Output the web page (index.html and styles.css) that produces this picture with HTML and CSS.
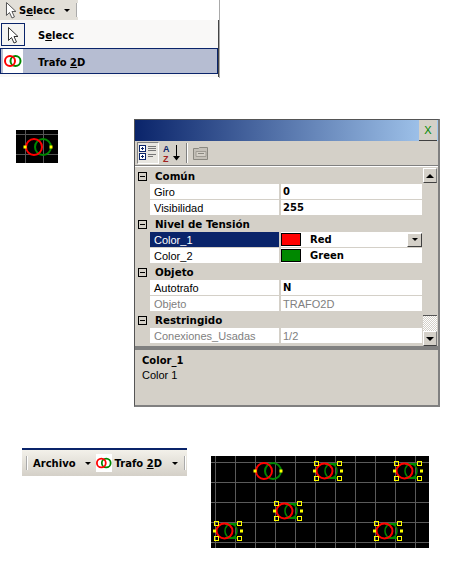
FILE: index.html
```html
<!DOCTYPE html>
<html lang="es">
<head>
  <meta charset="UTF-8">
  <title>Trafo 2D</title>
  <link rel="stylesheet" href="styles.css">
</head>
<body>
  <svg class="defs" width="0" height="0">
    <defs>
      <path id="cursor" d="M3.5 1.5v13l3-3 2.5 5.5 2.5-1-2.5-5.5h4z"/>
      <g id="trafo">
        <circle cx="5" cy="0" r="8" fill="none" stroke="#080" stroke-width="2"/>
        <circle cx="-4" cy="0" r="8" fill="none" stroke="#f00" stroke-width="2"/>
        <rect x="-14.500" y="-1.500" width="3" height="3" fill="#ff0"/>
        <rect x="11.500" y="-1.500" width="3" height="3" fill="#ff0"/>
      </g>
      <g id="trafo-sel">
        <path d="M-3 -7H9M-3 7H9" stroke="#080" stroke-width="2"/>
        <ellipse cx="3" cy="0" rx="6" ry="7" fill="none" stroke="#080" stroke-width="1.500"/>
        <ellipse cx="-3.500" cy="0" rx="8" ry="7.500" fill="none" stroke="#f00" stroke-width="2"/>
        <rect x="-15" y="-1.500" width="3" height="3" fill="#ff0"/>
        <rect x="12" y="-1.500" width="3" height="3" fill="#ff0"/>
        <g fill="none" stroke="#ff0">
          <rect x="-13.500" y="-9.500" width="4" height="4"/>
          <rect x="9.500" y="-9.500" width="4" height="4"/>
          <rect x="-13.500" y="5.500" width="4" height="4"/>
          <rect x="9.500" y="5.500" width="4" height="4"/>
        </g>
      </g>
      <g id="rings">
        <circle cx="11.500" cy="8" r="5" fill="none" stroke="#080" stroke-width="2"/>
        <circle cx="6" cy="8" r="5" fill="none" stroke="#f00" stroke-width="2"/>
      </g>
    </defs>
  </svg>

  <div class="top">
    <div class="top-bar">
      <svg class="cursor-small" width="16" height="18" viewBox="0 0 16 18"><use href="#cursor" fill="#fff" stroke="#555"/></svg>
      <span class="bold">S<u>e</u>lecc</span>
      <span class="arrow"></span>
      <span class="sep"></span>
    </div>
    <div class="menu">
      <div class="menu-row">
        <span class="menu-icon sel-icon">
          <svg width="16" height="18" viewBox="0 0 16 18"><use href="#cursor" fill="#fff" stroke="#333"/></svg>
        </span>
        <span class="bold">S<u>e</u>lecc</span>
      </div>
      <div class="menu-row active">
        <span class="menu-icon">
          <svg width="18" height="16" viewBox="0 0 18 16"><use href="#rings"/></svg>
        </span>
        <span class="bold">Trafo <u>2</u>D</span>
      </div>
    </div>
  </div>

  <div class="middle">
    <svg class="mini" width="42" height="33" viewBox="0 0 42 33">
      <rect width="42" height="33" fill="#000"/>
      <path d="M9.500 0V33M27.500 0V33M0 4.500H42M0 24.500H42" stroke="#555"/>
      <use href="#trafo" x="22" y="17"/>
    </svg>

    <div class="panel">
      <div class="title">
        <span class="close">X</span>
      </div>
      <div class="tools">
        <span class="tool pressed">
          <svg width="20" height="18" viewBox="0 0 20 18">
            <g fill="#fff" stroke="#0a246a"><rect x="1.500" y="1.500" width="6" height="6"/><rect x="1.500" y="9.500" width="6" height="6"/></g>
            <path d="M3 4.500h3M4.500 3v3M3 12.500h3M4.500 11v3" stroke="#0a246a"/>
            <path d="M10 2.500h8M10 4.500h8M10 6.500h8M10 10.500h8M10 12.500h5" stroke="#777"/>
          </svg>
        </span>
        <span class="tool">
          <svg width="20" height="20" viewBox="0 0 20 20">
            <text x="1" y="9" class="az a">A</text>
            <text x="1" y="19" class="az z">Z</text>
            <path d="M14.500 2v14" stroke="#000"/>
            <path d="M11 13h7l-3.500 4.500z" fill="#000"/>
          </svg>
        </span>
        <span class="tool-sep"></span>
        <span class="tool off">
          <svg width="18" height="16" viewBox="0 0 18 16">
            <path d="M1.500 14.500V3.500h5l1-1h8v12z" fill="#c4c0b8" stroke="#8a8880"/>
            <path d="M4 6.500h10v5H4z" fill="#d4d0c8" stroke="#a09c94"/>
            <path d="M6 8.500h6" stroke="#8a8880"/>
          </svg>
        </span>
      </div>

      <div class="grid">
        <div class="rows">
          <div class="group"><span class="box"></span>Común</div>
          <div class="row"><span class="name">Giro</span><span class="val strong">0</span></div>
          <div class="row"><span class="name">Visibilidad</span><span class="val strong">255</span></div>

          <div class="group"><span class="box"></span>Nivel de Tensión</div>
          <div class="row"><span class="name picked">Color_1</span><span class="val strong"><i class="swatch red"></i>Red<span class="drop"></span></span></div>
          <div class="row"><span class="name">Color_2</span><span class="val strong"><i class="swatch green"></i>Green</span></div>

          <div class="group"><span class="box"></span>Objeto</div>
          <div class="row"><span class="name">Autotrafo</span><span class="val strong">N</span></div>
          <div class="row"><span class="name dim">Objeto</span><span class="val dim">TRAFO2D</span></div>

          <div class="group"><span class="box"></span>Restringido</div>
          <div class="row"><span class="name dim">Conexiones_Usadas</span><span class="val dim">1/2</span></div>
        </div>
        <div class="scroll">
          <span class="scroll-btn"><i class="up"></i></span>
          <span class="thumb"></span>
          <span class="track"></span>
          <span class="scroll-btn"><i class="down"></i></span>
        </div>
      </div>

      <div class="split"></div>
      <div class="desc">
        <div class="bold">Color_1</div>
        <div>Color 1</div>
      </div>
    </div>
  </div>

  <div class="bottom">
    <div class="bar">
      <span class="sep"></span>
      <span class="bold label-a">Archivo</span>
      <span class="arrow"></span>
      <span class="bar-icon">
        <svg width="16" height="16" viewBox="0 0 18 16"><use href="#rings"/></svg>
      </span>
      <span class="bold">Trafo <u>2</u>D</span>
      <span class="arrow"></span>
      <span class="sep"></span>
    </div>
    <svg class="canvas" width="218" height="92" viewBox="0 0 218 92">
      <rect width="218" height="92" fill="#000"/>
      <path d="M4.500 0V92M24.500 0V92M44.500 0V92M64.500 0V92M84.500 0V92M104.500 0V92M124.500 0V92M144.500 0V92M164.500 0V92M184.500 0V92M204.500 0V92M0 6.500H218M0 26.500H218M0 46.500H218M0 66.500H218M0 86.500H218" stroke="#5a5a5a"/>
      <use href="#trafo" x="57" y="15"/>
      <use href="#trafo-sel" x="117" y="15"/>
      <use href="#trafo-sel" x="197" y="15"/>
      <use href="#trafo-sel" x="77" y="55"/>
      <use href="#trafo-sel" x="17" y="75"/>
      <use href="#trafo-sel" x="177" y="75"/>
    </svg>
  </div>
</body>
</html>
```

FILE: styles.css
```css
body {
  margin: 0;
  background: #fff;
  color: #000;
  font-family: "Liberation Sans", Arial, sans-serif;
  font-size: 11px;
}
.defs {
  position: absolute;
}
.bold {
  font-family: "DejaVu Sans", sans-serif;
  font-weight: bold;
  font-size: 10px;
  white-space: nowrap;
}

/* menu de arriba */
.top {
  width: 220px;
  height: 78px;
  border-right: 1px solid #aaa;
  box-sizing: border-box;
}
.top-bar {
  display: flex;
  align-items: center;
  width: 78px;
  height: 20px;
  background: #e2dfd8;
  padding-left: 3px;
  box-sizing: border-box;
}
.top-bar .arrow {
  margin-left: 9px;
}
.top-bar .sep {
  margin-left: 6px;
}
.arrow {
  width: 0;
  height: 0;
  border: 3px solid transparent;
  border-top: 3px solid #000;
  border-bottom: 0;
}
.sep {
  width: 1px;
  height: 14px;
  background: #aaa;
  border-right: 1px solid #fff;
}
.menu {
  height: 57px;
  background: #f9f8f7;
  border-right: 1px solid #444;
  padding-top: 3px;
  box-sizing: border-box;
}
.menu-row {
  display: flex;
  align-items: center;
  height: 23px;
  margin-bottom: 2px;
}
.menu-row .bold {
  margin: 2px 0 0 13px;
}
.menu-icon {
  display: flex;
  align-items: center;
  justify-content: center;
  width: 24px;
  height: 23px;
  margin-left: 1px;
  background: #fff;
}
.sel-icon {
  border: 1px solid #0a246a;
  box-sizing: border-box;
  background: #f5f4f2;
}
.active {
  height: 26px;
  background: #b6bdd2;
  border: 1px solid #0a246a;
  box-sizing: border-box;
}
.active .menu-icon {
  margin-left: 2px;
  width: 20px;
  height: 24px;
}
.active .bold {
  margin-left: 15px;
}

/* zona del medio */
.middle {
  display: flex;
  align-items: flex-start;
  padding-top: 41px;
}
.mini {
  margin: 11px 0 0 16px;
}
.panel {
  width: 306px;
  height: 288px;
  margin-left: 76px;
  background: #d4d0c8;
  border: 1px solid #555;
  border-right: 2px solid #808080;
  border-bottom: 2px solid #808080;
  box-sizing: border-box;
}
.title {
  display: flex;
  justify-content: flex-end;
  height: 21px;
  background: linear-gradient(to right, #0a246a, #a6caf0);
  padding-right: 1px;
}
.close {
  width: 18px;
  height: 21px;
  background: #d4d0c8;
  border-bottom: 1px solid #404040;
  box-sizing: border-box;
  color: #080;
  text-align: center;
  line-height: 20px;
  font-size: 11px;
}
.tools {
  display: flex;
  align-items: center;
  gap: 2px;
  height: 25px;
  padding-left: 2px;
  border-bottom: 1px solid #808080;
  box-shadow: 0 1px 0 #fff;
  box-sizing: border-box;
}
.tool {
  display: flex;
  align-items: center;
  justify-content: center;
  width: 22px;
  height: 22px;
}
.pressed {
  background: #e8e6e0;
  border: 1px solid;
  border-color: #808080 #fff #fff #808080;
  box-sizing: border-box;
}
.tool-sep {
  width: 1px;
  height: 20px;
  background: #808080;
  border-right: 1px solid #fff;
  margin: 0 0 0 1px;
}
.az {
  font-family: "Liberation Sans", sans-serif;
  font-size: 9px;
  font-weight: bold;
}
.a {
  fill: #0a246a;
}
.z {
  fill: #a02020;
}

/* tabla de propiedades */
.grid {
  display: flex;
  height: 178px;
  margin-top: 2px;
}
.rows {
  width: 287px;
}
.group {
  display: flex;
  align-items: center;
  height: 16px;
  font-family: "DejaVu Sans", sans-serif;
  font-weight: bold;
  font-size: 10.3px;
}
.box {
  position: relative;
  width: 7px;
  height: 7px;
  margin: 0 8px 0 3px;
  border: 1px solid #000;
}
.box::after {
  content: "";
  position: absolute;
  left: 1px;
  top: 3px;
  width: 5px;
  height: 1px;
  background: #000;
}
.row {
  display: flex;
  height: 15px;
  margin-bottom: 1px;
  margin-left: 15px;
  line-height: 16px;
}
.name {
  width: 125px;
  padding-left: 4px;
  background: #fff;
  margin-right: 2px;
}
.val {
  display: flex;
  align-items: center;
  flex: 1;
  padding-left: 2px;
  background: #fff;
}
.strong {
  font-family: "DejaVu Sans", sans-serif;
  font-weight: bold;
  font-size: 10px;
}
.picked {
  background: #0a246a;
  color: #fff;
}
.dim {
  color: #808080;
}
.swatch {
  width: 18px;
  height: 11px;
  margin: 0 9px 0 -2px;
  border: 1px solid #000;
}
.red {
  background: #f00;
}
.green {
  background: #080;
}
.drop {
  display: flex;
  align-items: center;
  justify-content: center;
  width: 15px;
  height: 14px;
  margin-left: auto;
  background: #d4d0c8;
  border: 1px solid;
  border-color: #fff #404040 #404040 #fff;
  box-sizing: border-box;
}
.drop::after {
  content: "";
  border: 3px solid transparent;
  border-top: 3px solid #000;
  border-bottom: 0;
}
.scroll {
  display: flex;
  flex-direction: column;
  width: 14px;
  margin-left: 1px;
}
.scroll-btn {
  display: flex;
  align-items: center;
  justify-content: center;
  height: 15px;
  background: #d4d0c8;
  border: 1px solid;
  border-color: #fff #808080 #404040 #fff;
  box-sizing: border-box;
}
.up {
  border: 4px solid transparent;
  border-bottom: 4px solid #000;
  border-top: 0;
}
.down {
  border: 4px solid transparent;
  border-top: 4px solid #000;
  border-bottom: 0;
}
.thumb {
  height: 133px;
  background: #d4d0c8;
  border-bottom: 1px solid #555;
  box-sizing: border-box;
}
.track {
  height: 15px;
  background: repeating-conic-gradient(#fff 0 25%, #d4d0c8 0 50%) 0 0 / 2px 2px;
}
.split {
  height: 4px;
  background: #808080;
}
.desc {
  padding: 3px 0 0 7px;
  line-height: 15px;
}

/* abajo */
.bottom {
  display: flex;
  align-items: flex-start;
  padding-top: 41px;
}
.bar {
  display: flex;
  align-items: center;
  width: 165px;
  height: 28px;
  margin-left: 22px;
  padding: 0 1px 0 4px;
  background: linear-gradient(to bottom, #f3f1ea, #d4d0c8);
  border-top: 2px solid #0a246a;
  box-sizing: border-box;
}
.label-a {
  margin-left: 5px;
}
.label-a + .arrow {
  margin-left: 9px;
}
.bar-icon {
  display: flex;
  width: 16px;
  height: 18px;
  align-items: center;
  margin: 0 3px 0 5px;
  background: #fff;
}
.bar-icon + .bold + .arrow {
  margin-left: 10px;
}
.bar .sep:last-child {
  margin-left: auto;
}
.canvas {
  margin: 8px 0 0 24px;
}
```
